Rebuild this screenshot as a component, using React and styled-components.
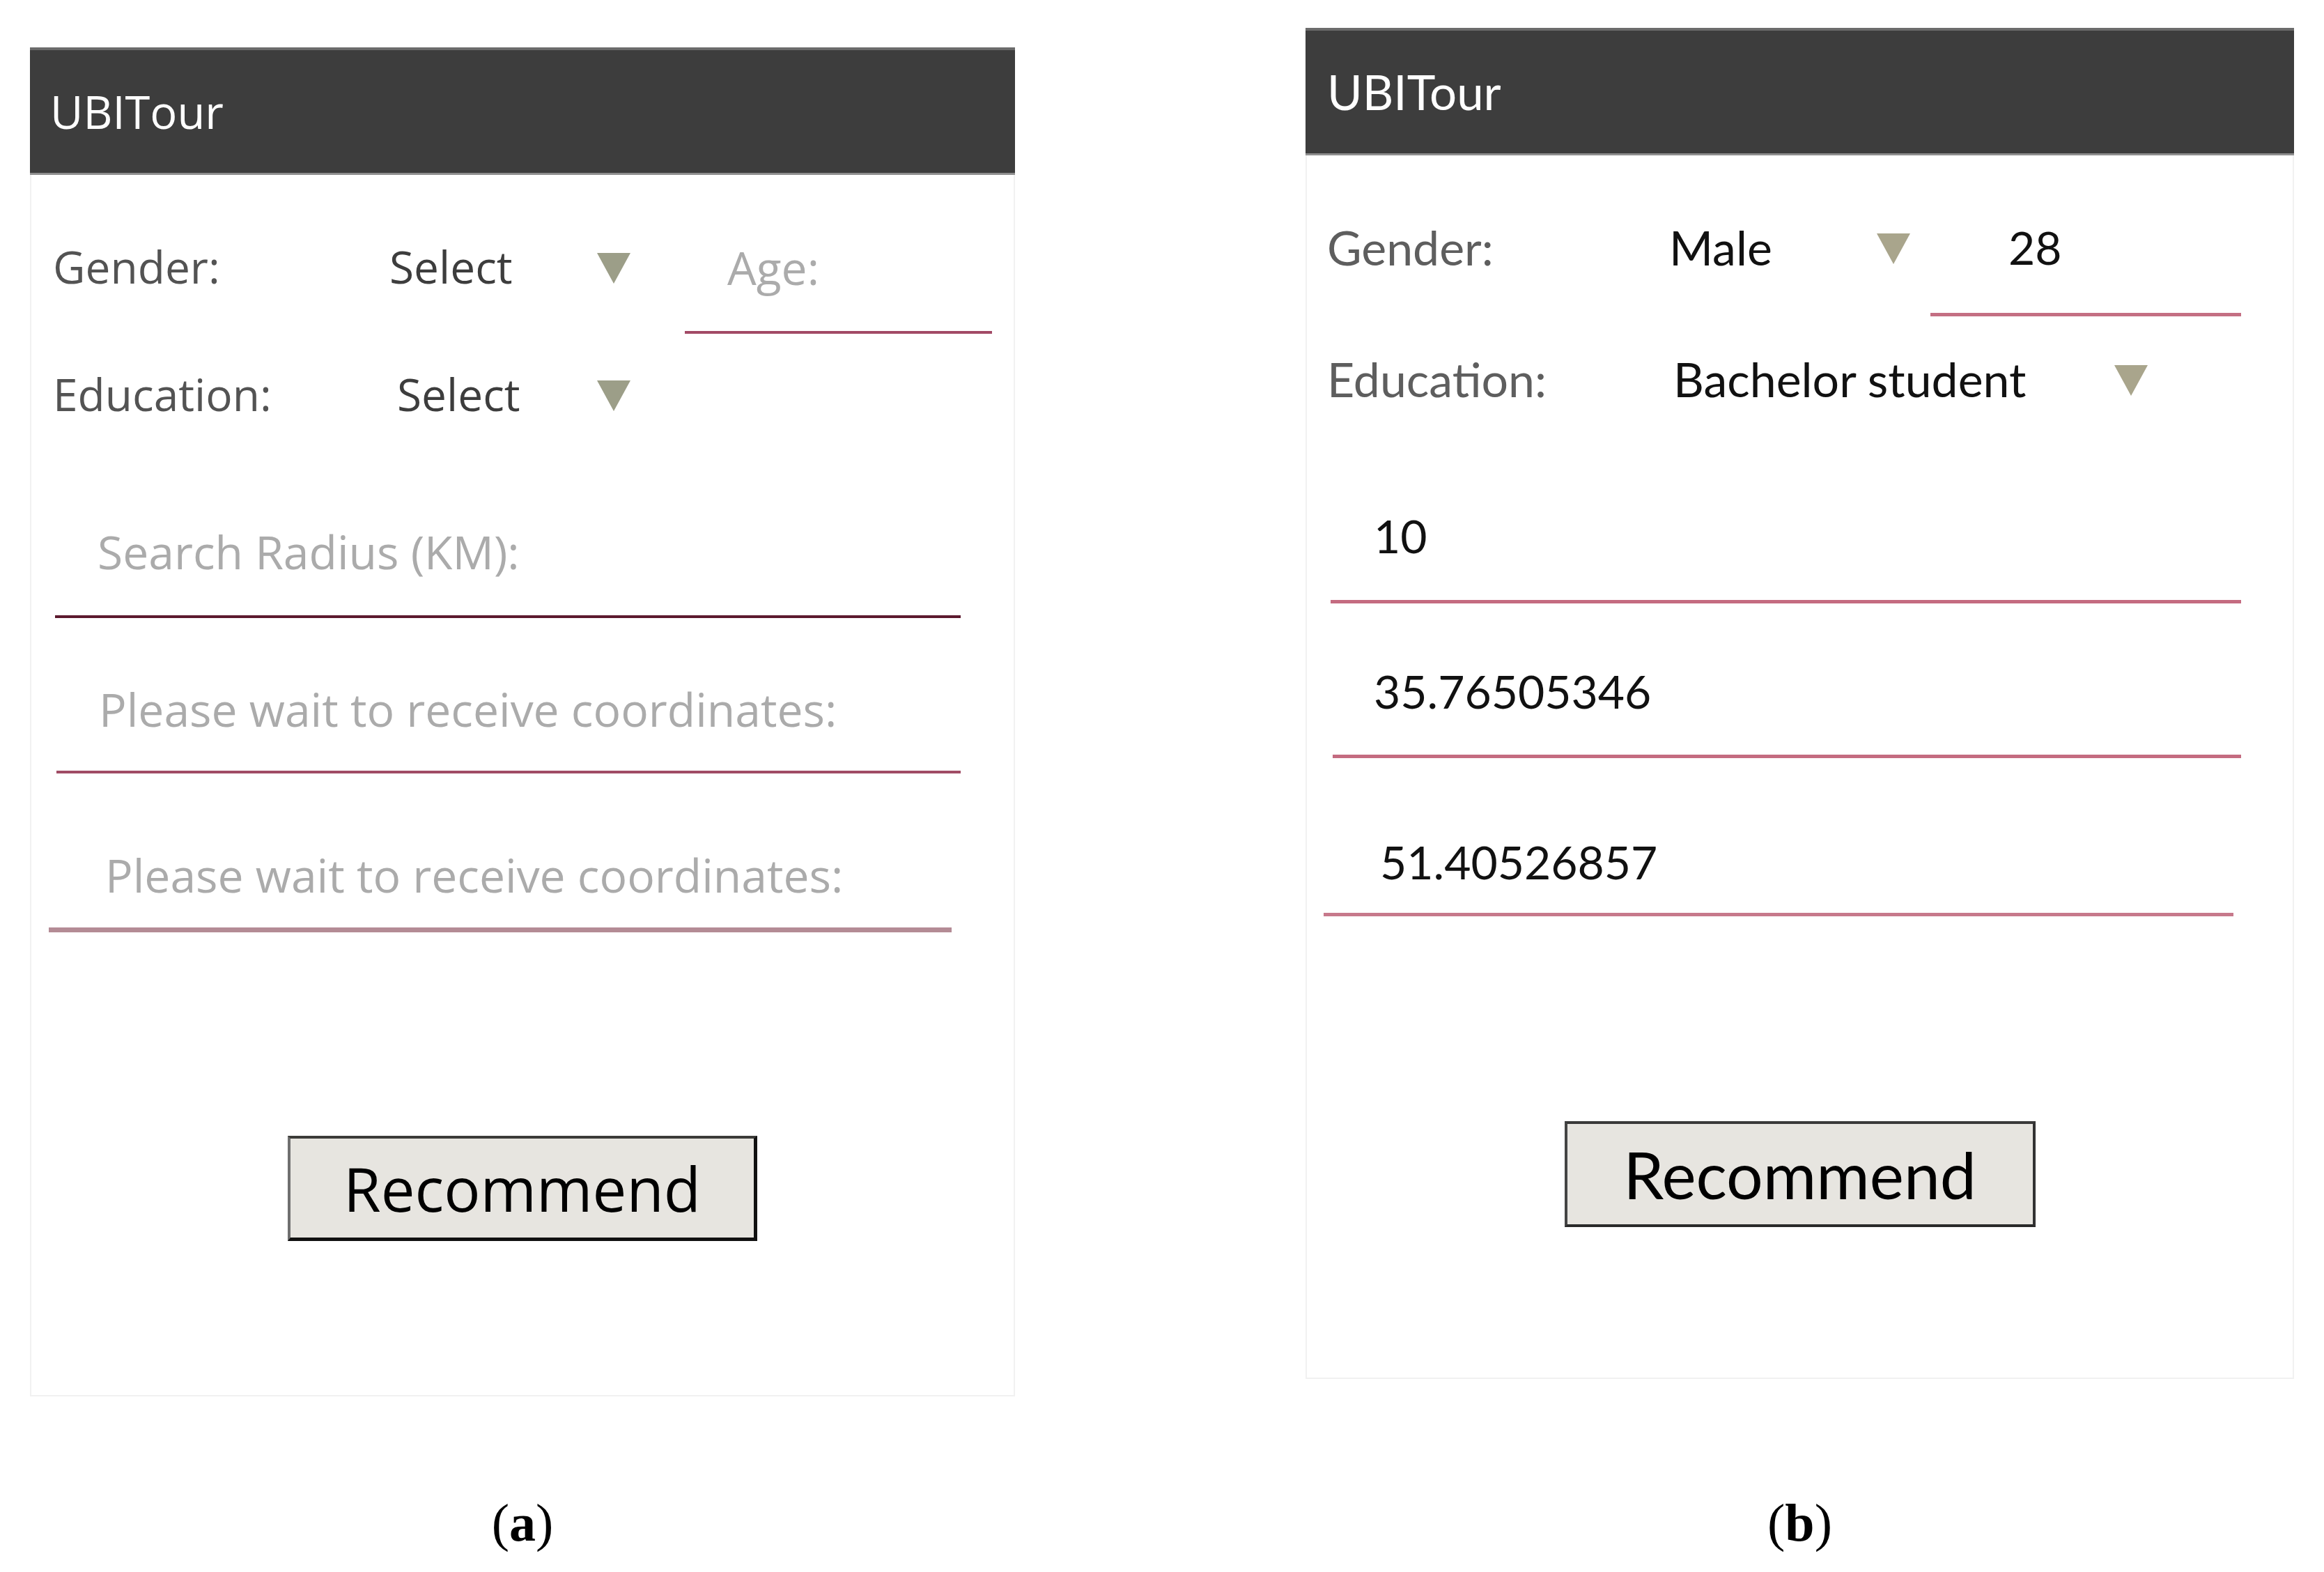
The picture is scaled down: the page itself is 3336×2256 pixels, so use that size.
import React from "react";
import styled, { createGlobalStyle, ThemeProvider } from "styled-components";

const GlobalStyle = createGlobalStyle`
  *, *::before, *::after {
    box-sizing: border-box;
  }
  body {
    margin: 0;
    background: #ffffff;
  }
`;

const themeA = {
  font: "'Open Sans', 'Noto Sans', sans-serif",
  size: 64,
  fieldSize: 66,
  titleSize: 65,
  label: "#535353",
  value: "#3d3d3d",
  hint: "#ababab",
  arrow: "#9c9e88",
  buttonSize: 87,
  titlePad: 29,
};

const themeB = {
  font: "Lato, 'Open Sans', sans-serif",
  size: 68,
  fieldSize: 66,
  titleSize: 69,
  label: "#5e5e5e",
  value: "#111111",
  hint: "#111111",
  arrow: "#a9a58c",
  buttonSize: 93,
  titlePad: 31,
};

const Figure = styled.div`
  display: flex;
  width: 3336px;
  height: 2256px;
  background: #ffffff;
`;

const Column = styled.div`
  display: flex;
  flex-direction: column;
  align-items: center;
  width: ${(p) => p.$width}px;
  margin-left: ${(p) => p.$left}px;
  padding-top: ${(p) => p.$top}px;
  padding-bottom: 31px;
`;

const Panel = styled.div`
  width: 100%;
  display: flex;
  flex-direction: column;
  font-family: ${(p) => p.theme.font};
`;

const Header = styled.div`
  height: 183px;
  display: flex;
  align-items: center;
  padding-left: ${(p) => p.theme.titlePad}px;
  background: #3d3d3d;
  border-top: 4px solid #6b6b6b;
  border-bottom: 3px solid #8e8e8e;
`;

const Title = styled.span`
  color: #ffffff;
  font-size: ${(p) => p.theme.titleSize}px;
  line-height: 100px;
`;

const Body = styled.div`
  height: ${(p) => p.$height}px;
  display: flex;
  flex-direction: column;
  border: 2px solid #f1f1f1;
  border-top: none;
`;

const SelectRow = styled.div`
  display: flex;
  align-items: flex-start;
  margin-top: ${(p) => p.$top}px;
  padding-left: ${(p) => p.$pad}px;
`;

const Label = styled.span`
  width: ${(p) => p.$width}px;
  flex: none;
  font-size: ${(p) => p.theme.size}px;
  line-height: 100px;
  color: ${(p) => p.theme.label};
  white-space: nowrap;
`;

const Value = styled(Label)`
  color: ${(p) => p.theme.value};
`;

const Arrow = styled.span`
  display: flex;
  align-items: center;
  height: 100px;
  padding-top: 4px;
  flex: none;
  color: ${(p) => p.theme.arrow};
`;

const Field = styled.div`
  flex: none;
  width: ${(p) => p.$width}px;
  margin-top: ${(p) => p.$top || 0}px;
  margin-left: ${(p) => p.$left}px;
  padding-left: ${(p) => p.$indent}px;
  padding-bottom: ${(p) => p.$pad}px;
  border-bottom: ${(p) => p.$line}px solid ${(p) => p.$color};
  font-size: ${(p) => p.theme.fieldSize}px;
  line-height: 100px;
  color: ${(p) => (p.$hint ? p.theme.hint : p.theme.value)};
  white-space: nowrap;
`;

const ButtonRow = styled.div`
  display: flex;
  justify-content: center;
  margin-top: ${(p) => p.$top}px;
`;

const Button = styled.button`
  width: ${(p) => p.$width}px;
  height: ${(p) => p.$height}px;
  padding: 0;
  background: #e7e5e0;
  font-family: ${(p) => p.theme.font};
  font-size: ${(p) => p.theme.buttonSize}px;
  line-height: 1;
  color: #000000;
  border-style: solid;
  border-width: ${(p) => p.$edges};
  border-color: ${(p) => p.$colors};
`;

const Caption = styled.div`
  margin-top: auto;
  font-family: "Liberation Serif", "Times New Roman", serif;
  font-size: 76px;
  line-height: 80px;
  color: #000000;
`;

const Letter = styled.b`
  font-weight: 700;
`;

const Triangle = () => {
  return (
    <svg width="48" height="44" viewBox="0 0 48 44">
      <polygon points="0,0 48,0 24,44" fill="currentColor" />
    </svg>
  );
};

const panels = [
  {
    id: "a",
    theme: themeA,
    left: 43,
    width: 1414,
    top: 68,
    body: 1753,
    rows: [
      {
        top: 82,
        pad: 31,
        label: "Gender:",
        labelWidth: 483,
        value: "Select",
        valueWidth: 298,
        age: { left: 78, width: 441, indent: 61, pad: 42, line: 4, color: "#a24a66", text: "Age:", hint: true },
      },
      { top: 37, pad: 31, label: "Education:", labelWidth: 494, value: "Select", valueWidth: 287 },
    ],
    fields: [
      { top: 125, left: 34, width: 1300, indent: 61, pad: 42, line: 4, color: "#5c1a2e", text: "Search Radius (KM):" },
      { top: 80, left: 36, width: 1298, indent: 61, pad: 39, line: 4, color: "#a04c65", text: "Please wait to receive coordinates:" },
      { top: 95, left: 25, width: 1296, indent: 81, pad: 26, line: 7, color: "#b48b95", text: "Please wait to receive coordinates:" },
    ],
    hint: true,
    button: { top: 292, width: 674, height: 151, edges: "4px 5px 5px 4px", colors: "#3b3b38 #111111 #111111 #6f6f6f" },
  },
  {
    id: "b",
    theme: themeB,
    left: 417,
    width: 1419,
    top: 40,
    body: 1756,
    rows: [
      {
        top: 82,
        pad: 29,
        label: "Gender:",
        labelWidth: 491,
        value: "Male",
        valueWidth: 298,
        age: { left: 29, width: 446, indent: 112, pad: 44, line: 5, color: "#c46f83", text: "28" },
      },
      { top: 40, pad: 29, label: "Education:", labelWidth: 497, value: "Bachelor student", valueWidth: 633 },
    ],
    fields: [
      { top: 125, left: 34, width: 1307, indent: 62, pad: 42, line: 5, color: "#c46b80", text: "10" },
      { top: 76, left: 37, width: 1304, indent: 59, pad: 41, line: 5, color: "#c46b80", text: "35.76505346" },
      { top: 99, left: 24, width: 1306, indent: 81, pad: 23, line: 5, color: "#c7798b", text: "51.40526857" },
    ],
    hint: false,
    button: { top: 294, width: 676, height: 152, edges: "4px", colors: "#3a3a3a #333333 #2a2a2a #444444" },
  },
];

const App = () => {
  return (
    <Figure>
      <GlobalStyle />
      {panels.map((panel) => (
        <ThemeProvider theme={panel.theme} key={panel.id}>
          <Column $left={panel.left} $width={panel.width} $top={panel.top}>
            <Panel>
              <Header>
                <Title>UBITour</Title>
              </Header>
              <Body $height={panel.body}>
                {panel.rows.map((row) => (
                  <SelectRow key={row.label} $top={row.top} $pad={row.pad}>
                    <Label $width={row.labelWidth}>{row.label}</Label>
                    <Value $width={row.valueWidth}>{row.value}</Value>
                    <Arrow>
                      <Triangle />
                    </Arrow>
                    {row.age && (
                      <Field
                        $left={row.age.left}
                        $width={row.age.width}
                        $indent={row.age.indent}
                        $pad={row.age.pad}
                        $line={row.age.line}
                        $color={row.age.color}
                        $hint={row.age.hint}
                      >
                        {row.age.text}
                      </Field>
                    )}
                  </SelectRow>
                ))}
                {panel.fields.map((field, i) => (
                  <Field
                    key={i}
                    $top={field.top}
                    $left={field.left}
                    $width={field.width}
                    $indent={field.indent}
                    $pad={field.pad}
                    $line={field.line}
                    $color={field.color}
                    $hint={panel.hint}
                  >
                    {field.text}
                  </Field>
                ))}
                <ButtonRow $top={panel.button.top}>
                  <Button
                    $width={panel.button.width}
                    $height={panel.button.height}
                    $edges={panel.button.edges}
                    $colors={panel.button.colors}
                  >
                    Recommend
                  </Button>
                </ButtonRow>
              </Body>
            </Panel>
            <Caption>
              (<Letter>{panel.id}</Letter>)
            </Caption>
          </Column>
        </ThemeProvider>
      ))}
    </Figure>
  );
};

export default App;
